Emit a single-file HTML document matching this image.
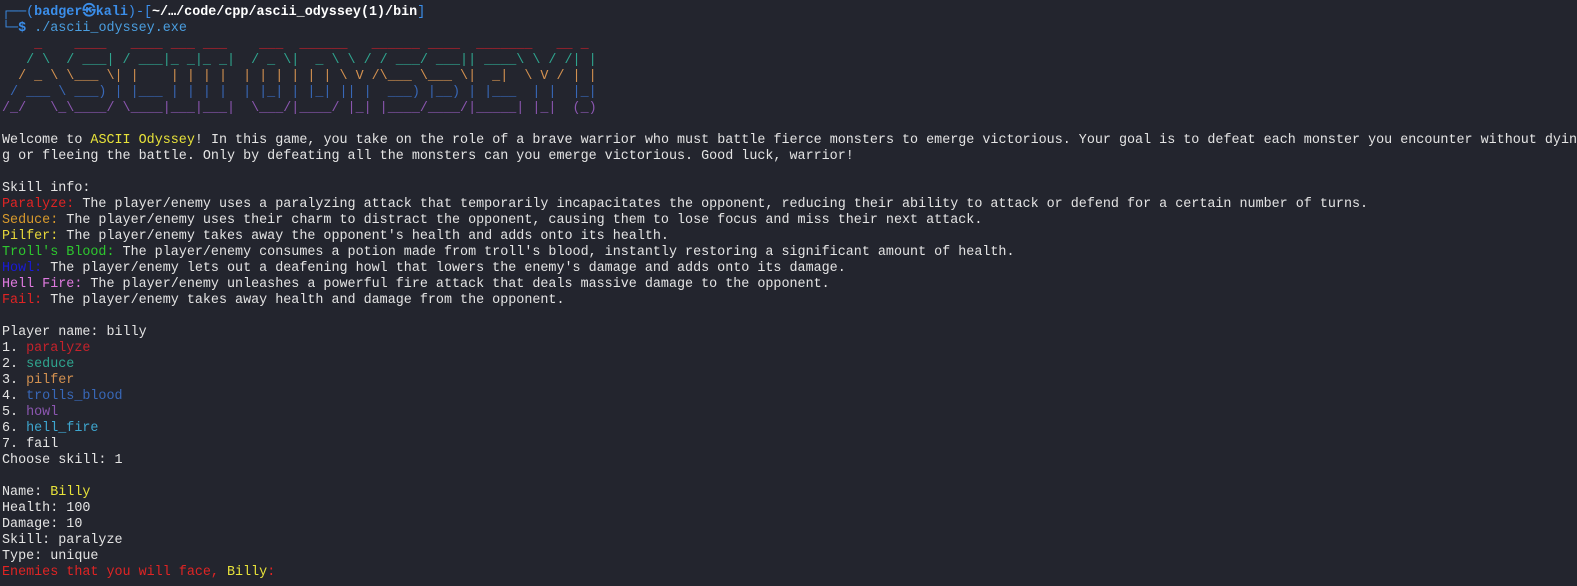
<!DOCTYPE html>
<html><head><meta charset="utf-8"><style>
html,body{margin:0;padding:0;background:#23252e;width:1577px;height:586px;overflow:hidden}
pre{margin:0;padding:5px 0 0 2px;font-family:"Liberation Mono",monospace;font-size:13.4px;line-height:16px;color:#e4e4e4;white-space:pre}
.bl{color:#3b8eea;font-weight:bold}.w{color:#fff;font-weight:bold}.g{color:#4a9ee0}
.r{color:#c4222b}.t{color:#2fa58f}.o{color:#d39150}.b{color:#3868b8}.p{color:#8b56b0}.c{color:#3ea6cf}
.y{color:#e8e33a}.or{color:#d99a2c}.gr{color:#2ec82e}.db{color:#1a1ad8}.pk{color:#e07ae0}.rr{color:#e02424}.ye{color:#e8d83a}
.pr{color:#3b8eea}
</style></head><body><pre><span class="pr">┌──(</span><span class="bl">badger㉿kali</span><span class="pr">)-[</span><span class="w">~/…/code/cpp/ascii_odyssey(1)/bin</span><span class="pr">]</span>
<span class="pr">└─</span><span class="bl">$</span> <span class="g">./ascii_odyssey.exe</span>
<span class="r">    _    ____   ____ ___ ___    ___  ______   ______ ____  _______   __ _ </span>
<span class="t">   / \  / ___| / ___|_ _|_ _|  / _ \|  _ \ \ / / ___/ ___|| ____\ \ / /| |</span>
<span class="o">  / _ \ \___ \| |    | | | |  | | | | | | \ V /\___ \___ \|  _|  \ V / | |</span>
<span class="b"> / ___ \ ___) | |___ | | | |  | |_| | |_| || |  ___) |__) | |___  | |  |_|</span>
<span class="p">/_/   \_\____/ \____|___|___|  \___/|____/ |_| |____/____/|_____| |_|  (_)</span>

Welcome to <span class="y">ASCII Odyssey</span>! In this game, you take on the role of a brave warrior who must battle fierce monsters to emerge victorious. Your goal is to defeat each monster you encounter without dyin
g or fleeing the battle. Only by defeating all the monsters can you emerge victorious. Good luck, warrior!

Skill info:
<span class="rr">Paralyze:</span> The player/enemy uses a paralyzing attack that temporarily incapacitates the opponent, reducing their ability to attack or defend for a certain number of turns.
<span class="or">Seduce:</span> The player/enemy uses their charm to distract the opponent, causing them to lose focus and miss their next attack.
<span class="ye">Pilfer:</span> The player/enemy takes away the opponent's health and adds onto its health.
<span class="gr">Troll's Blood:</span> The player/enemy consumes a potion made from troll's blood, instantly restoring a significant amount of health.
<span class="db">Howl:</span> The player/enemy lets out a deafening howl that lowers the enemy's damage and adds onto its damage.
<span class="pk">Hell Fire:</span> The player/enemy unleashes a powerful fire attack that deals massive damage to the opponent.
<span class="rr">Fail:</span> The player/enemy takes away health and damage from the opponent.

Player name: billy
1. <span class="r">paralyze</span>
2. <span class="t">seduce</span>
3. <span class="o">pilfer</span>
4. <span class="b">trolls_blood</span>
5. <span class="p">howl</span>
6. <span class="c">hell_fire</span>
7. fail
Choose skill: 1

Name: <span class="y">Billy</span>
Health: 100
Damage: 10
Skill: paralyze
Type: unique
<span class="rr">Enemies that you will face, </span><span class="y">Billy</span><span class="rr">:</span>
</pre></body></html>
